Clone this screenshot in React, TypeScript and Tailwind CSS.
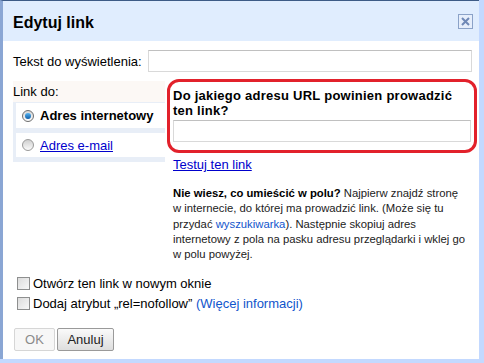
import React from "react";

function Radio({ checked }: { checked: boolean }) {
  return (
    <span
      className={
        "relative inline-block w-[12px] h-[12px] rounded-full border shrink-0 " +
        (checked
          ? "border-[#6e6e6e] bg-gradient-to-b from-[#d6d6d6] to-[#fbfbfb]"
          : "border-[#999999] bg-gradient-to-b from-[#d0d0d0] to-[#fbfbfb]")
      }
    >
      {checked && (
        <span className="absolute left-[2px] top-[2px] w-[6px] h-[6px] rounded-full bg-gradient-to-b from-[#56b4f0] to-[#0d5ea8]" />
      )}
    </span>
  );
}

function Checkbox() {
  return (
    <span className="inline-block w-[13px] h-[13px] border border-[#8e8f8f] bg-gradient-to-br from-[#dcdcdc] to-[#f8f8f8] shrink-0" />
  );
}

export default function App() {
  return (
    <div className="w-[484px] h-[363px] bg-[#c3d9ff] overflow-hidden font-['Liberation_Sans',Arial,sans-serif] text-[13px] text-black">
      <div className="w-[479px] h-[359px] bg-white border-t border-t-[#3d5b86] border-l-[3px] border-l-[#8aa6d4] flex flex-col">
        {/* Header */}
        <div className="h-[40px] bg-[#e0edfe] flex items-start justify-between pt-[13px] pl-[10px] pr-[6px]">
          <span className="text-[16px] font-bold leading-[18px]">Edytuj link</span>
          <svg width="15" height="15" viewBox="0 0 15 15">
            <rect x="0.5" y="0.5" width="14" height="14" fill="#e6eefb" stroke="#8ba2c8" />
            <path d="M4 4 L11 11 M11 4 L4 11" stroke="#6f88b6" strokeWidth="2" />
          </svg>
        </div>

        {/* Body */}
        <div className="flex flex-col pl-[10px] pr-[2px]">
          {/* Row 1 */}
          <div className="mt-[9px] flex items-center justify-between pr-[5px] h-[22px]">
            <span className="leading-[15px]">Tekst do wyświetlenia:</span>
            <div className="w-[324px] h-[22px] border border-[#d9d9d9] border-t-[#c0c0c0] bg-white" />
          </div>

          {/* Link section */}
          <div className="mt-[7px] flex gap-[2px]">
            {/* Left tabs */}
            <div className="w-[152px] mt-[2px] flex flex-col">
              <div className="h-[21px] pt-[3px] leading-[15px] bg-[#fcf8f5]">Link do:</div>
              <div className="bg-[#e8eef7] pl-[3px] pt-[1px] pb-[5px] flex flex-col gap-[5px]">
                <div className="h-[25px] bg-white flex items-center pl-[6px] gap-[6px]">
                  <Radio checked />
                  <span className="font-bold leading-[15px]">Adres internetowy</span>
                </div>
                <div className="h-[24px] bg-white flex items-center pl-[6px] gap-[6px]">
                  <Radio checked={false} />
                  <span className="leading-[15px] text-[#0000cc] underline">Adres e-mail</span>
                </div>
              </div>
            </div>

            {/* Right content */}
            <div className="w-[310px] flex flex-col">
              <div className="h-[74px] border-[3px] border-[#e2212b] rounded-[12px] pt-[6px] px-[3px] pb-[8px] flex flex-col">
                <div className="font-bold leading-[15px] tracking-[0.25px] whitespace-nowrap">
                  Do jakiego adresu URL powinien prowadzić
                  <br />
                  ten link?
                </div>
                <div className="mt-[2px] h-[22px] border border-[#d9d9d9] border-t-[#c0c0c0] bg-white" />
              </div>
              <div className="mt-[4px] pl-[6px] leading-[15px]">
                <span className="text-[#0000cc] underline">Testuj ten link</span>
              </div>
              <div className="mt-[14px] pl-[6px] text-[11.3px] leading-[15.25px] text-[#222222] whitespace-nowrap">
                <b className="text-black">Nie wiesz, co umieścić w polu?</b> Najpierw znajdź stronę
                <br />
                w internecie, do której ma prowadzić link. (Może się tu
                <br />
                przydać <span className="text-[#1155cc]">wyszukiwarka</span>). Następnie skopiuj adres
                <br />
                internetowy z pola na pasku adresu przeglądarki i wklej go
                <br />w polu powyżej.
              </div>
            </div>
          </div>

          {/* Checkboxes */}
          <div className="mt-[11px] h-[20px] flex items-center pl-[4px] gap-[3px]">
            <Checkbox />
            <span className="leading-[15px]">Otwórz ten link w nowym oknie</span>
          </div>
          <div className="h-[20px] flex items-center pl-[4px] gap-[3px]">
            <Checkbox />
            <span className="leading-[15px]">
              Dodaj atrybut „rel=nofollow” <span className="text-[#1155cc]">(Więcej informacji)</span>
            </span>
          </div>

          {/* Buttons */}
          <div className="mt-[15px] ml-[1px] flex gap-[2px]">
            <div className="w-[41px] h-[23px] rounded-[2px] border border-[#d6d6d6] bg-[#f7f7f7] flex items-center justify-center text-[#8a8a8a]">
              OK
            </div>
            <div className="w-[57px] h-[23px] rounded-[2px] border border-[#9a9a9a] bg-gradient-to-b from-[#fafafa] to-[#dedede] flex items-center justify-center text-[#222222]">
              Anuluj
            </div>
          </div>
        </div>
      </div>
    </div>
  );
}
